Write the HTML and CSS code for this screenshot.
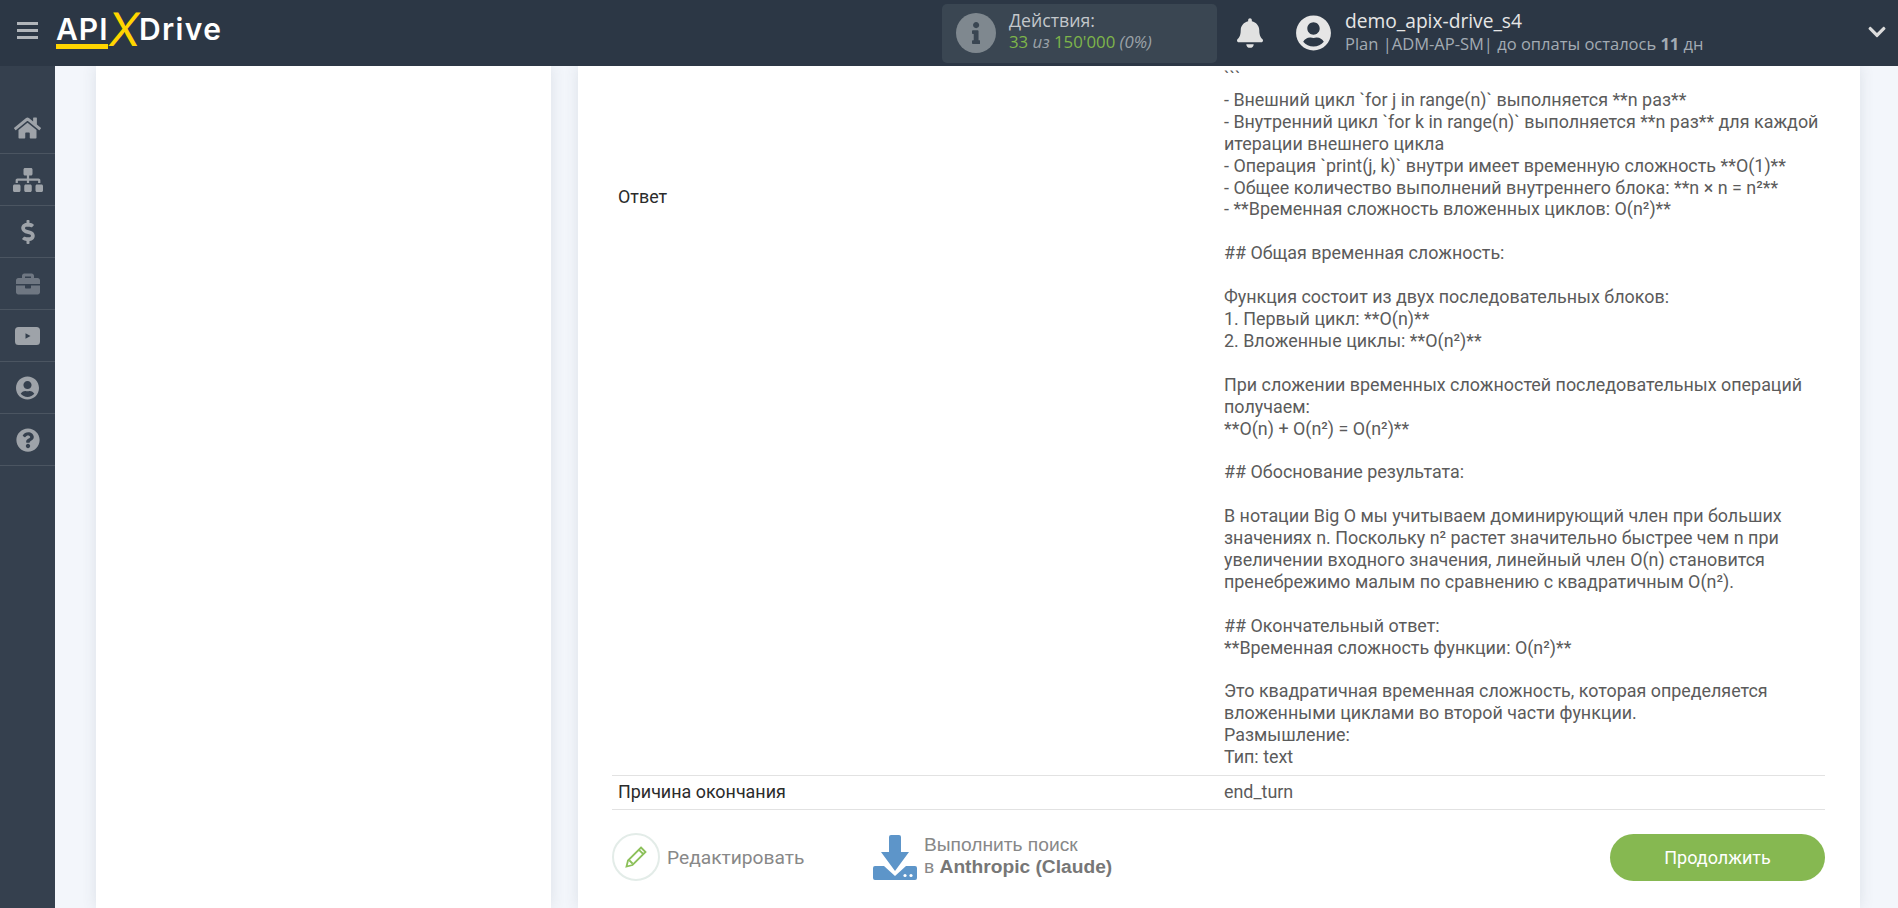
FILE: index.html
```html
<!DOCTYPE html>
<html>
<head>
  <meta charset="utf-8">
  <title>ApiX-Drive</title>
  <link rel="stylesheet" href="styles.css">
</head>
<body>
  <header class="topbar">
    <div class="burger"><span></span><span></span><span></span></div>
    <div class="logo">
      <span class="logo-api">API</span><span class="logo-x">X</span><span class="logo-drive">Drive</span>
    </div>
    <div class="actions-box">
      <span class="info-badge">
        <svg viewBox="0 0 192 512"><path d="M20 424.229h20V279.771H20c-11.046 0-20-8.954-20-20V212c0-11.046 8.954-20 20-20h112c11.046 0 20 8.954 20 20v212.229h20c11.046 0 20 8.954 20 20V492c0 11.046-8.954 20-20 20H20c-11.046 0-20-8.954-20-20v-47.771c0-11.046 8.954-20 20-20zM96 0C56.235 0 24 32.235 24 72s32.235 72 72 72 72-32.235 72-72S135.764 0 96 0z"/></svg>
      </span>
      <div class="actions-text">
        <div class="actions-title">Действия:</div>
        <div class="actions-count"><b>33</b> <i>из</i> <b>150'000</b> <i>(0%)</i></div>
      </div>
    </div>
    <svg class="bell" viewBox="0 0 448 512"><path d="M224 512c35.32 0 63.97-28.65 63.97-64H160.03c0 35.35 28.65 64 63.97 64zm215.39-149.71c-19.32-20.76-55.47-51.99-55.47-154.29 0-77.7-54.48-139.9-127.94-155.16V32c0-17.67-14.32-32-31.98-32s-31.98 14.33-31.98 32v20.84C118.56 68.1 64.08 130.3 64.08 208c0 102.3-36.15 133.53-55.47 154.29-6 6.45-8.66 14.16-8.61 21.71.11 16.4 12.98 32 32.1 32h383.8c19.12 0 32-15.6 32.1-32 .05-7.55-2.61-15.27-8.61-21.71z"/></svg>
    <svg class="avatar" viewBox="0 0 496 512"><path d="M248 8C111 8 0 119 0 256s111 248 248 248 248-111 248-248S385 8 248 8zm0 96c48.6 0 88 39.4 88 88s-39.4 88-88 88-88-39.4-88-88 39.4-88 88-88zm0 344c-58.7 0-111.3-26.6-146.5-68.2 18.8-35.4 55.6-59.8 98.5-59.8 2.4 0 4.8.4 7.1 1.1 13 4.2 26.6 6.9 40.9 6.9 14.3 0 28-2.7 40.9-6.9 2.3-.7 4.7-1.1 7.1-1.1 42.9 0 79.7 24.4 98.5 59.8C359.3 421.4 306.7 448 248 448z"/></svg>
    <div class="account">
      <div class="account-name">demo_apix-drive_s4</div>
      <div class="account-plan">Plan |ADM-AP-SM| до оплаты осталось <b>11</b> дн</div>
    </div>
    <svg class="chevron" viewBox="0 0 448 512"><path d="M207.029 381.476L12.686 187.132c-9.373-9.373-9.373-24.569 0-33.941l22.667-22.667c9.357-9.357 24.522-9.375 33.901-.04L224 284.505l154.745-154.021c9.379-9.335 24.544-9.317 33.901.04l22.667 22.667c9.373 9.373 9.373 24.569 0 33.941L240.971 381.476c-9.373 9.372-24.569 9.372-33.942 0z"/></svg>
  </header>

  <div class="layout">
    <nav class="sidebar">
      <a class="nav-item"><svg class="ico-home" viewBox="0 0 576 512"><path d="M280.37 148.26L96 300.11V464a16 16 0 0 0 16 16l112.06-.29a16 16 0 0 0 15.92-16V368a16 16 0 0 1 16-16h64a16 16 0 0 1 16 16v95.64a16 16 0 0 0 16 16.05L464 480a16 16 0 0 0 16-16V300L295.67 148.26a12.19 12.19 0 0 0-15.3 0zM571.6 251.47L488 182.56V44.05a12 12 0 0 0-12-12h-56a12 12 0 0 0-12 12v72.61L318.47 43a48 48 0 0 0-61 0L4.34 251.47a12 12 0 0 0-1.6 16.9l25.5 31A12 12 0 0 0 45.15 301l235.22-193.74a12.19 12.19 0 0 1 15.3 0L530.9 301a12 12 0 0 0 16.9-1.6l25.5-31a12 12 0 0 0-1.7-16.93z"/></svg></a>
      <a class="nav-item"><svg class="ico-sitemap" viewBox="0 0 640 512"><path d="M128 352H32c-17.67 0-32 14.33-32 32v96c0 17.67 14.33 32 32 32h96c17.67 0 32-14.33 32-32v-96c0-17.67-14.33-32-32-32zm-24-80h192v48h48v-48h192v48h48v-57.59c0-21.17-17.23-38.41-38.41-38.41H344v-64h40c17.67 0 32-14.33 32-32V32c0-17.67-14.33-32-32-32H256c-17.67 0-32 14.33-32 32v96c0 17.67 14.33 32 32 32h40v64H94.41C73.23 224 56 241.23 56 262.41V320h48v-48zm264 80h-96c-17.67 0-32 14.33-32 32v96c0 17.67 14.33 32 32 32h96c17.67 0 32-14.33 32-32v-96c0-17.67-14.33-32-32-32zm240 0h-96c-17.67 0-32 14.33-32 32v96c0 17.67 14.33 32 32 32h96c17.67 0 32-14.33 32-32v-96c0-17.67-14.33-32-32-32z"/></svg></a>
      <a class="nav-item"><svg class="ico-dollar" viewBox="0 0 288 512"><path d="M209.2 233.4l-108-31.6C88.7 198.2 80 186.5 80 173.5c0-16.3 13.2-29.5 29.5-29.5h66.3c12.2 0 24.2 3.7 34.2 10.5 6.1 4.1 14.3 3.1 19.5-2l34.8-34c7.1-6.9 6.1-18.4-1.8-24.5C238 74.8 207.4 64.1 176 64V16c0-8.8-7.2-16-16-16h-32c-8.8 0-16 7.2-16 16v48h-2.5C45.8 64-5.4 118.7.5 183.6c4.2 46.1 39.4 83.6 83.8 96.6l102.5 30c12.5 3.7 21.2 15.3 21.2 28.3 0 16.3-13.2 29.5-29.5 29.5h-66.3C100 368 88 364.3 78 357.5c-6.1-4.1-14.3-3.1-19.5 2l-34.8 34c-7.1 6.9-6.1 18.4 1.8 24.5 24.5 19.2 55.1 29.9 86.5 30v48c0 8.8 7.2 16 16 16h32c8.8 0 16-7.2 16-16v-48.2c46.6-.9 90.3-28.6 105.7-72.7 21.5-61.6-14.6-124.8-72.5-141.7z"/></svg></a>
      <a class="nav-item nav-dim"><svg class="ico-case" viewBox="0 0 512 512"><path d="M320 336c0 8.84-7.16 16-16 16h-96c-8.84 0-16-7.16-16-16v-48H0v144c0 25.6 22.4 48 48 48h416c25.6 0 48-22.4 48-48V288H320v48zm144-208h-80V80c0-25.6-22.4-48-48-48H176c-25.6 0-48 22.4-48 48v48H48c-25.6 0-48 22.4-48 48v80h512v-80c0-25.6-22.4-48-48-48zm-144 0H192V96h128v32z"/></svg></a>
      <a class="nav-item"><svg class="ico-video" viewBox="0 0 25 18"><path fill-rule="evenodd" d="M3.5 0h18A3.5 3.5 0 0 1 25 3.5v11a3.5 3.5 0 0 1-3.5 3.5h-18A3.5 3.5 0 0 1 0 14.500v-11A3.500 3.500 0 0 1 3.500 0zM10.500 6.200v5.600l5-2.800z"/></svg></a>
      <a class="nav-item"><svg class="ico-user" viewBox="0 0 496 512"><path d="M248 8C111 8 0 119 0 256s111 248 248 248 248-111 248-248S385 8 248 8zm0 96c48.6 0 88 39.4 88 88s-39.4 88-88 88-88-39.4-88-88 39.4-88 88-88zm0 344c-58.7 0-111.3-26.6-146.5-68.2 18.8-35.4 55.6-59.8 98.5-59.8 2.4 0 4.8.4 7.1 1.1 13 4.2 26.6 6.9 40.9 6.9 14.3 0 28-2.7 40.9-6.9 2.3-.7 4.7-1.1 7.1-1.1 42.9 0 79.7 24.4 98.5 59.8C359.3 421.4 306.7 448 248 448z"/></svg></a>
      <a class="nav-item"><svg class="ico-help" viewBox="0 0 512 512"><path d="M504 256c0 136.997-111.043 248-248 248S8 392.997 8 256C8 119.083 119.043 8 256 8s248 111.083 248 248zM262.655 90c-54.497 0-89.255 22.957-116.549 63.758-3.536 5.286-2.353 12.415 2.715 16.258l34.699 26.31c5.205 3.947 12.621 3.008 16.665-2.122 17.864-22.658 30.113-35.797 57.303-35.797 20.429 0 45.698 13.148 45.698 32.958 0 14.976-12.363 22.667-32.534 33.976C247.128 238.528 216 254.941 216 296v4c0 6.627 5.373 12 12 12h56c6.627 0 12-5.373 12-12v-1.333c0-28.462 83.186-29.647 83.186-106.667 0-58.002-60.165-102-116.531-102zM256 338c-25.365 0-46 20.635-46 46 0 25.364 20.635 46 46 46s46-20.636 46-46c0-25.365-20.635-46-46-46z"/></svg></a>
    </nav>

    <main class="content">
      <aside class="steps-panel"></aside>
      <section class="result-panel">
        <div class="result-row result-row-long">
          <div class="result-label">Ответ</div>
          <div class="result-value">```
- Внешний цикл `for j in range(n)` выполняется **n раз**
- Внутренний цикл `for k in range(n)` выполняется **n раз** для каждой итерации внешнего цикла
- Операция `print(j, k)` внутри имеет временную сложность **O(1)**
- Общее количество выполнений внутреннего блока: **n × n = n²**
- **Временная сложность вложенных циклов: O(n²)**

## Общая временная сложность:

Функция состоит из двух последовательных блоков:
1. Первый цикл: **O(n)**
2. Вложенные циклы: **O(n²)**

При сложении временных сложностей последовательных операций получаем:
**O(n) + O(n²) = O(n²)**

## Обоснование результата:

В нотации Big O мы учитываем доминирующий член при больших значениях n. Поскольку n² растет значительно быстрее чем n при увеличении входного значения, линейный член O(n) становится пренебрежимо малым по сравнению с квадратичным O(n²).

## Окончательный ответ:
**Временная сложность функции: O(n²)**

Это квадратичная временная сложность, которая определяется вложенными циклами во второй части функции.
Размышление:
Тип: text</div>
        </div>
        <div class="result-row">
          <div class="result-label">Причина окончания</div>
          <div class="result-value">end_turn</div>
        </div>

        <div class="result-footer">
          <a class="edit-link">
            <span class="edit-circle">
              <svg viewBox="0 0 24 24"><path d="M17 2.500l4.500 4.500L8.500 20 2.500 21.500 4 15.500zM15 4.800l4.200 4.200M5.500 15.500l3 3" /></svg>
            </span>
            Редактировать
          </a>
          <a class="search-link">
            <svg class="search-icon" viewBox="0 0 44 45"><path d="M18 0h8a2 2 0 0 1 2 2v15h8L22 36 8 17h8V2a2 2 0 0 1 2-2z"/><path d="M2 31h9l11 10 11-10h9a2 2 0 0 1 2 2v10a2 2 0 0 1-2 2H2a2 2 0 0 1-2-2V33a2 2 0 0 1 2-2z"/><circle cx="32" cy="40.500" r="1.600" fill="#fff"/><circle cx="38" cy="40.500" r="1.600" fill="#fff"/></svg>
            <span class="search-text">Выполнить поиск<br>в <b>Anthropic (Claude)</b></span>
          </a>
          <a class="continue-btn">Продолжить</a>
        </div>
      </section>
    </main>
  </div>
</body>
</html>
```

FILE: styles.css
```css
* {
  box-sizing: border-box;
}
html, body {
  height: 100%;
}
body {
  margin: 0;
  display: flex;
  flex-direction: column;
  overflow: hidden;
  background: #f3f6fb;
  font-family: Roboto, "Liberation Sans", sans-serif;
  font-size: 17.9px;
  color: #5b5b5b;
}

/* Top bar */
.topbar {
  height: 66px;
  flex: none;
  display: flex;
  align-items: center;
  background: #2c3745;
  position: relative;
  z-index: 2;
}
.burger {
  width: 21px;
  margin: 0 0 5px 17px;
  display: flex;
  flex-direction: column;
  gap: 4px;
}
.burger span {
  height: 3px;
  background: #b1b5ba;
}
.logo {
  margin: 0 0 14px 18px;
  width: 167px;
  display: flex;
  align-items: baseline;
  font-family: Inter, "Liberation Sans", sans-serif;
  font-weight: 600;
  font-size: 30px;
  letter-spacing: 1px;
  color: #fff;
}
.logo-x {
  color: #ffd500;
  font-size: 46px;
  line-height: 40px;
  font-weight: 400;
  margin: 0 -3px 0 1px;
  transform: translateY(6px) skewX(-7deg);
}
.logo-api {
  border-bottom: 5px solid #ffd500;
  line-height: 30px;
}
.logo-drive {
  letter-spacing: 1.4px;
}
.actions-box {
  margin-left: 719px;
  width: 275px;
  height: 59px;
  display: flex;
  align-items: center;
  gap: 13px;
  padding-left: 14px;
  background: #3a4652;
  border-radius: 5px;
  font-family: "Open Sans", sans-serif;
  font-size: 16.800px;
  line-height: 22px;
}
.info-badge {
  width: 40px;
  height: 40px;
  border-radius: 50%;
  background: #7f888f;
  display: flex;
  align-items: center;
  justify-content: center;
}
.info-badge svg {
  height: 22px;
  fill: #3a4652;
}
.actions-text {
  margin-bottom: 4px;
}
.actions-title {
  color: #c3c7cb;
  font-size: 17.700px;
}
.actions-count b {
  font-weight: 400;
  color: #7eb54a;
}
.actions-count i {
  color: #9ba2a8;
}
.bell {
  margin-left: 20px;
  width: 26px;
  height: 30px;
  fill: #e1e1e1;
}
.avatar {
  margin-left: 33px;
  width: 35px;
  height: 36px;
  fill: #e6e6e6;
}
.account {
  margin: 0 0 4px 14px;
  font-family: "Open Sans", sans-serif;
}
.account-name {
  font-size: 19.200px;
  line-height: 24px;
  color: #e6e6e6;
}
.account-plan {
  font-size: 16.500px;
  line-height: 21px;
  color: #a3abb3;
}
.chevron {
  position: absolute;
  right: 12px;
  top: 22px;
  width: 18px;
  height: 20px;
  fill: #dcdcdc;
}

/* Page below the bar */
.layout {
  flex: 1;
  display: flex;
  min-height: 0;
}
.sidebar {
  width: 55px;
  flex: none;
  padding-top: 36px;
  background: #35404e;
}
.nav-item {
  height: 52px;
  display: flex;
  align-items: center;
  justify-content: center;
  border-bottom: 1px solid #4b5561;
}
.nav-item svg {
  fill: #9ea3a9;
}
.nav-dim svg {
  fill: #6f7782;
}
.ico-home { width: 27px; height: 24px; }
.ico-sitemap { width: 30px; height: 24px; }
.ico-dollar { width: 14px; height: 24px; }
.ico-case { width: 24px; height: 24px; }
.ico-video { width: 25px; height: 18px; }
.ico-user { width: 23px; height: 24px; }
.ico-help { width: 24px; height: 24px; }

.content {
  flex: 1;
  display: flex;
  padding: 0 38px 0 41px;
  gap: 27px;
  min-width: 0;
}
.steps-panel {
  width: 455px;
  background: #fff;
  box-shadow: 0 0 14px rgba(60, 70, 90, 0.12);
}
.result-panel {
  flex: 1;
  background: #fff;
  box-shadow: 0 0 14px rgba(60, 70, 90, 0.12);
  padding: 0 35px 0 34px;
  overflow: hidden;
}
.result-row {
  display: grid;
  grid-template-columns: 606px 1fr;
  line-height: 21.900px;
}
.result-row-long {
  padding-top: 1px;
  padding-bottom: 7px;
}
.result-row + .result-row {
  border-top: 1px solid #e2e2e2;
  border-bottom: 1px solid #e2e2e2;
  padding: 5px 0;
  height: 35px;
}
.result-label {
  padding-left: 6px;
  color: #2b2b2b;
}
.result-row-long .result-label {
  padding-top: 119px;
}
.result-value {
  padding: 0 6px;
  white-space: pre-line;
}
.result-footer {
  display: flex;
  align-items: center;
  margin-top: 23px;
  height: 48px;
}
.edit-link {
  display: flex;
  align-items: center;
  gap: 7px;
  width: 261px;
  font-size: 19.200px;
  color: #888;
}
.edit-circle {
  width: 48px;
  height: 48px;
  border: 2px solid #e3ece8;
  border-radius: 50%;
  display: flex;
  align-items: center;
  justify-content: center;
}
.edit-circle svg {
  width: 24px;
  height: 24px;
  fill: none;
  stroke: #8cc05a;
  stroke-width: 1.800;
}
.search-link {
  display: flex;
  align-items: center;
  gap: 7px;
  color: #888;
}
.search-icon {
  width: 44px;
  height: 45px;
  fill: #5d95c9;
}
.search-text {
  font-family: "Liberation Sans", Arial, sans-serif;
  font-size: 19.200px;
  line-height: 22px;
  margin-bottom: 3px;
}
.search-text b {
  color: #777;
}
.continue-btn {
  margin-left: auto;
  width: 215px;
  height: 47px;
  border-radius: 24px;
  background: #86b851;
  color: #fff;
  font-size: 18px;
  font-weight: 400;
  display: flex;
  align-items: center;
  justify-content: center;
}
```
